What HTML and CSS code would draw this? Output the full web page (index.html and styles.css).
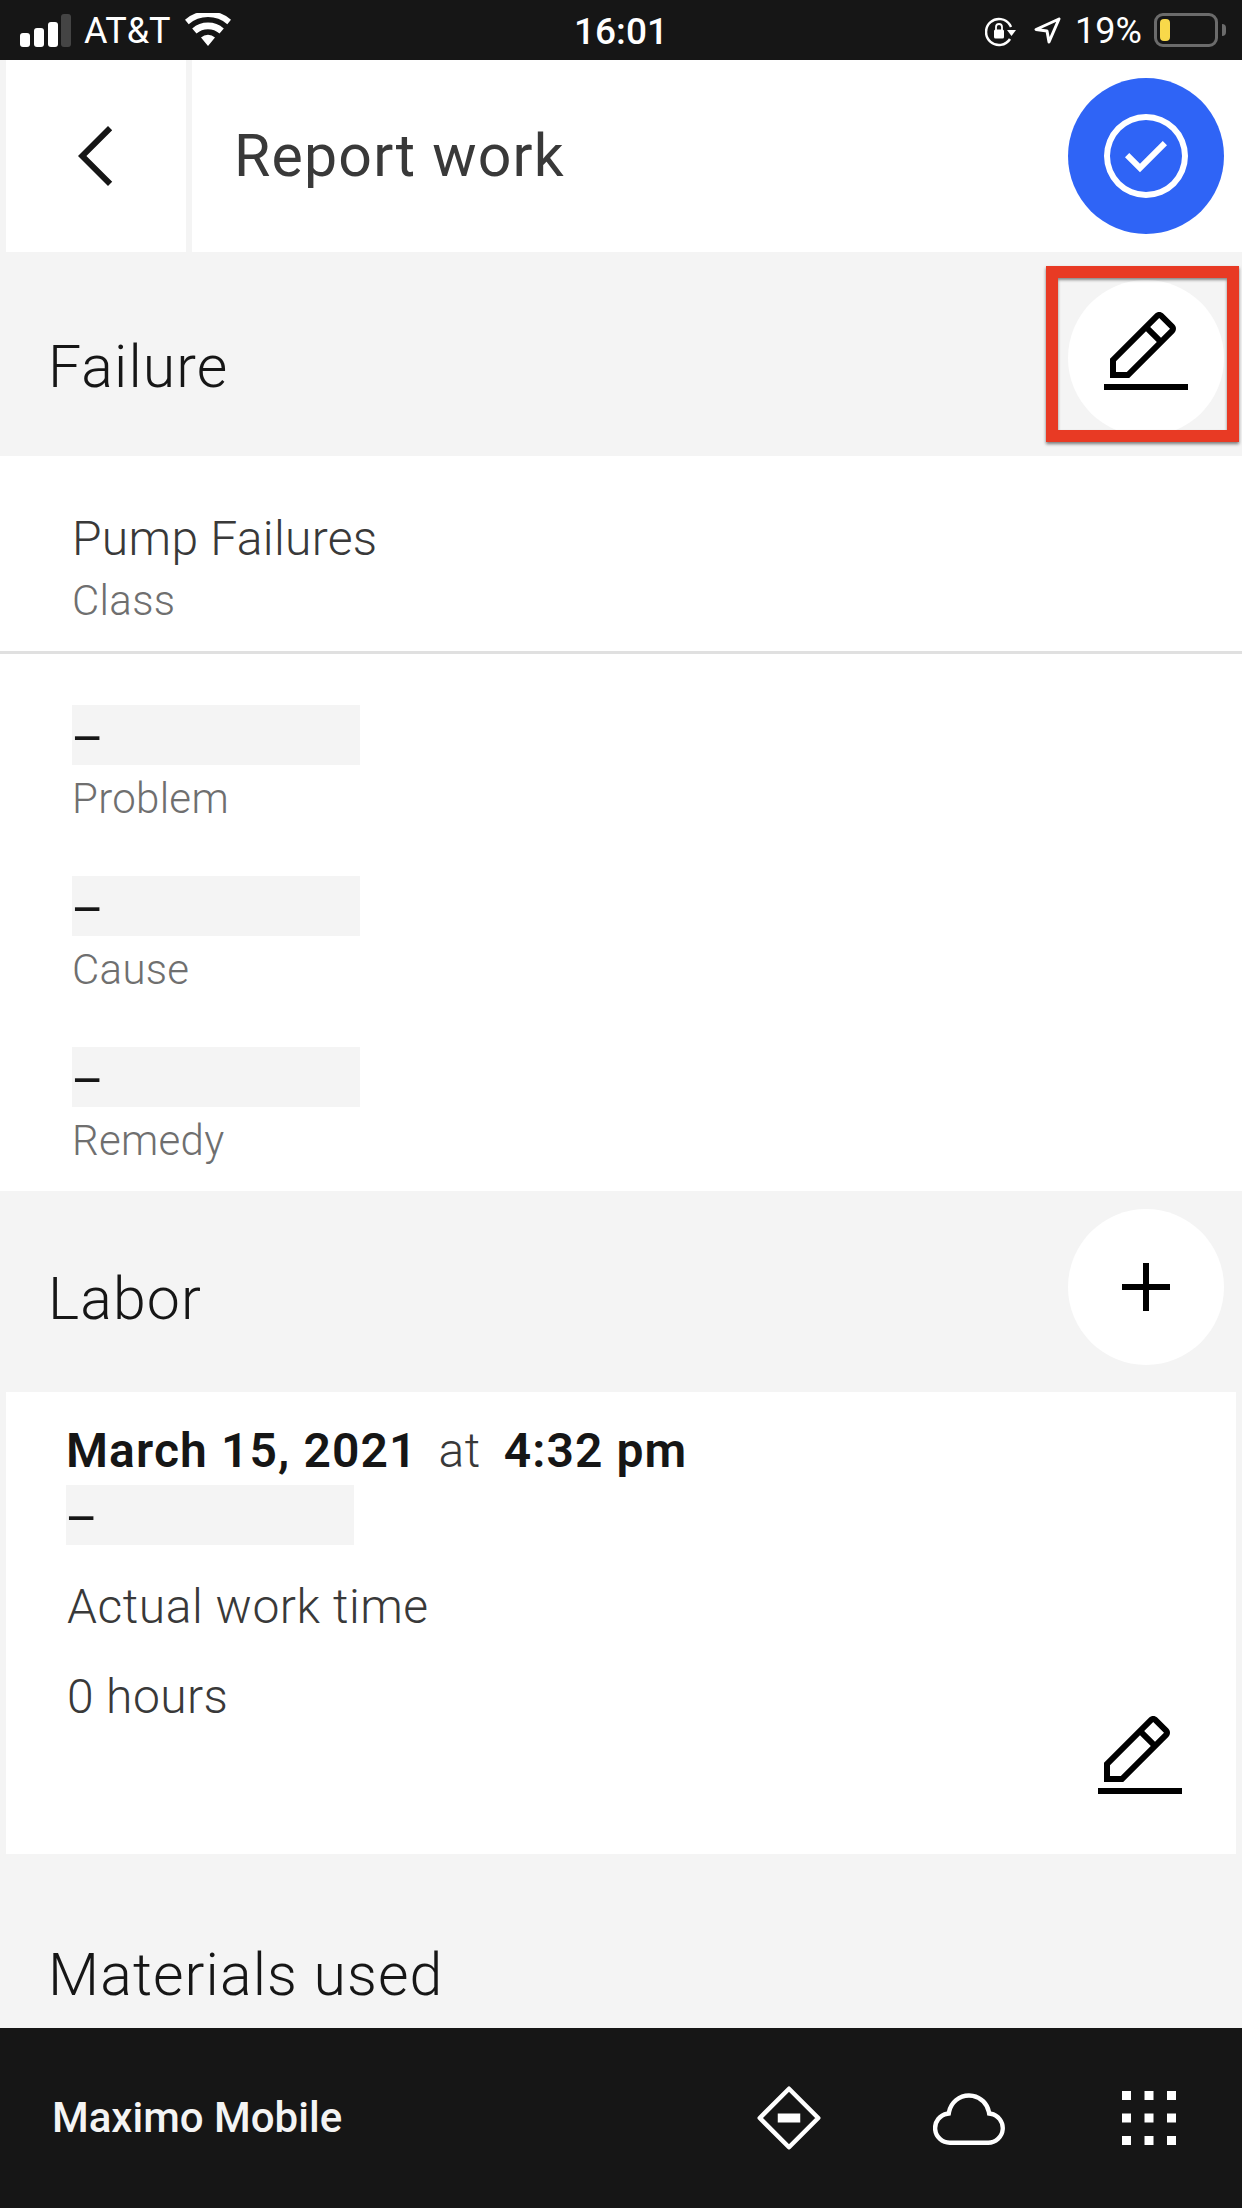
FILE: index.html
```html
<!DOCTYPE html>
<html lang="en">
<head>
<meta charset="utf-8">
<title>Report work</title>
<link rel="stylesheet" href="styles.css">
</head>
<body>
<div class="phone">
  <div class="status">
    <div class="status-left">
      <svg class="signal" width="51" height="33" viewBox="0 0 51 33"><rect x="0" y="19" width="10" height="14" rx="3" fill="#fff"/><rect x="14" y="14" width="10" height="19" rx="3" fill="#fff"/><rect x="28" y="8" width="10" height="25" rx="3" fill="#fff"/><rect x="41" y="0" width="10" height="33" rx="3" fill="#444"/></svg>
      <span class="carrier">AT&amp;T</span>
      <svg class="wifi" width="46" height="33" viewBox="0 0 46 33"><path d="M23 33l-7-8.500a10.500 10.500 0 0 1 14 0zM11.500 20.500l-4.300-5a24 24 0 0 1 31.600 0l-4.300 5a17.500 17.500 0 0 0-23 0zM3.700 11.300L0 6.700a35 35 0 0 1 46 0l-3.700 4.600a29 29 0 0 0-38.600 0z" fill="#fff"/></svg>
    </div>
    <span class="clock">16:01</span>
    <div class="status-right">
      <svg class="rotlock" width="31" height="30" viewBox="0 0 31 30"><path d="M25 22a13 13 0 1 1 0-14l1 2" fill="none" stroke="#fff" stroke-width="2.500"/><path d="M22 13h9l-4.500 6z" fill="#fff"/><rect x="9" y="12.500" width="10" height="9" rx="1.500" fill="#fff"/><path d="M11 13V10a3 3 0 0 1 6 0v3" fill="none" stroke="#fff" stroke-width="1.800"/></svg>
      <svg class="locate" width="27" height="27" viewBox="0 0 27 27"><path d="M25 2L2 12.500l11 1.500 2 11z" fill="none" stroke="#fff" stroke-width="3" stroke-linejoin="round"/></svg>
      <span class="pct">19%</span>
      <div class="battery"><div class="battery-fill"></div></div>
      <div class="battery-tip"></div>
    </div>
  </div>

  <header class="topbar">
    <div class="back">
      <svg width="96" height="96" viewBox="0 0 32 32"><path d="M10 16L20 6l1.400 1.400L12.800 16l8.600 8.600L20 26z" fill="#161616"/></svg>
    </div>
    <div class="topbar-main">
      <h1 class="page-title">Report work</h1>
      <div class="circle circle-blue">
        <svg width="96" height="96" viewBox="0 0 32 32" fill="#fff"><path d="M14 21.414l-5-5.001L10.413 15 14 18.586 21.585 11 23 12.415 14 21.414z"/><path d="M16 2a14 14 0 1 0 14 14A14 14 0 0 0 16 2zm0 26a12 12 0 1 1 12-12 12 12 0 0 1-12 12z"/></svg>
      </div>
    </div>
  </header>

  <section class="head head-failure">
    <h2 class="head-title">Failure</h2>
    <div class="circle">
      <svg class="pencil-top" width="96" height="96" viewBox="0 0 32 32"><path d="M2 26h28v2H2z"/><path d="M25.400 9c.8-.8.8-2 0-2.800l-3.600-3.600c-.8-.8-2-.8-2.800 0l-15 15V24h6.400l15-15zm-5-5L24 7.600l-3 3L17.400 7l3-3zM6 22v-3.600l10-10 3.600 3.600-10 10H6z"/></svg>
    </div>
    <div class="annotation"></div>
  </section>

  <section class="failure-body">
    <div class="class-row">
      <div class="value">Pump Failures</div>
      <div class="label">Class</div>
    </div>
    <div class="fields">
      <div class="field"><div class="skeleton">–</div><div class="label">Problem</div></div>
      <div class="field"><div class="skeleton">–</div><div class="label">Cause</div></div>
      <div class="field"><div class="skeleton">–</div><div class="label">Remedy</div></div>
    </div>
  </section>

  <section class="head head-labor">
    <h2 class="head-title">Labor</h2>
    <div class="circle">
      <svg width="96" height="96" viewBox="0 0 32 32"><path d="M17 15V8h-2v7H8v2h7v7h2v-7h7v-2h-7z"/></svg>
    </div>
  </section>

  <section class="labor-card">
    <div class="labor-text">
      <div class="labor-when"><b>March 15, 2021</b><span class="at">at</span><b>4:32 pm</b></div>
      <div class="skeleton">–</div>
      <div class="value labor-caption">Actual work time</div>
      <div class="value labor-hours">0 hours</div>
    </div>
    <svg class="labor-edit" width="96" height="96" viewBox="0 0 32 32"><path d="M2 26h28v2H2z"/><path d="M25.400 9c.8-.8.8-2 0-2.800l-3.600-3.600c-.8-.8-2-.8-2.800 0l-15 15V24h6.400l15-15zm-5-5L24 7.600l-3 3L17.400 7l3-3zM6 22v-3.600l10-10 3.600 3.600-10 10H6z"/></svg>
  </section>

  <section class="head head-materials">
    <h2 class="head-title">Materials used</h2>
  </section>

  <footer class="appbar">
    <span class="app-name">Maximo Mobile</span>
    <div class="app-icons">
      <div class="app-icon"><svg width="72" height="72" viewBox="0 0 32 32"><path d="M3 16L16 3l13 13-13 13z" fill="none" stroke="#fff" stroke-width="2" stroke-linejoin="round"/><rect x="11" y="14" width="10" height="4" fill="#fff"/></svg></div>
      <div class="app-icon"><svg width="72" height="72" viewBox="0 0 32 32"><path fill="#fff" d="M16 7h0a7.660 7.660 0 0 1 1.510.15 8 8 0 0 1 6.350 6.340l.26 1.350 1.350.24a5.500 5.500 0 0 1-1 10.920H7.500a5.500 5.500 0 0 1-1-10.920l1.340-.24.26-1.350A8 8 0 0 1 16 7m0-2a10 10 0 0 0-9.830 8.110A7.500 7.500 0 0 0 7.490 28h17a7.500 7.500 0 0 0 1.320-14.880 10 10 0 0 0-7.940-7.940A10.270 10.270 0 0 0 16 5z"/></svg></div>
      <div class="app-icon"><svg width="72" height="72" viewBox="0 0 32 32" fill="#fff"><rect x="4" y="4" width="4" height="4"/><rect x="14" y="4" width="4" height="4"/><rect x="24" y="4" width="4" height="4"/><rect x="4" y="14" width="4" height="4"/><rect x="14" y="14" width="4" height="4"/><rect x="24" y="14" width="4" height="4"/><rect x="4" y="24" width="4" height="4"/><rect x="14" y="24" width="4" height="4"/><rect x="24" y="24" width="4" height="4"/></svg></div>
    </div>
  </footer>
</div>
</body>
</html>
```
FILE: styles.css
```css
* { box-sizing: border-box; }
html, body { margin: 0; padding: 0; }
body { font-family: Roboto, "Noto Sans", sans-serif; background: #f4f4f4; color: #161616; }
.phone { width: 1242px; height: 2208px; display: flex; flex-direction: column; overflow: hidden; background: #f4f4f4; }

/* status bar */
.status { height: 60px; flex: none; background: #161616; color: #fff; display: flex; align-items: flex-start; justify-content: space-between; font-size: 36px; line-height: 42px; }
.status-left { width: 480px; display: flex; align-items: flex-start; padding: 10px 0 0 20px; }
.signal { margin: 4px 0 0 0; }
.carrier { margin-left: 13px; width: 101px; }
.wifi { margin-top: 3px; }
.clock { margin-top: 11px; font-weight: 500; font-size: 37px; }
.status-right { width: 480px; display: flex; align-items: flex-start; justify-content: flex-end; padding: 10px 16px 0 0; }
.rotlock { margin: 7px 0 0 0; }
.locate { margin: 7px 0 0 18px; }
.pct { margin-left: 14px; width: 79px; }
.battery { width: 64px; height: 34px; margin-top: 3px; border: 3px solid #6b6b6b; border-radius: 9px; padding: 3px; }
.battery-fill { width: 10px; height: 22px; background: #f8d84a; border-radius: 4px; }
.battery-tip { width: 4px; height: 12px; margin: 14px 0 0 4px; background: #6b6b6b; border-radius: 0 4px 4px 0; }

/* top bar */
.topbar { height: 192px; flex: none; display: flex; padding-left: 6px; gap: 6px; }
.back { width: 180px; background: #fff; display: flex; align-items: center; justify-content: center; }
.topbar-main { flex: 1; background: #fff; display: flex; align-items: center; justify-content: space-between; padding: 0 18px 0 42px; }
.page-title { margin: 0; font-size: 59px; font-weight: 375; letter-spacing: 1.2px; color: #393939; line-height: 72px; }
.circle { width: 156px; height: 156px; border-radius: 50%; background: #fff; display: flex; align-items: center; justify-content: center; flex: none; }
.circle-blue { background: #2f64f6; }

/* section heads */
.head { display: flex; justify-content: space-between; align-items: flex-start; padding: 0 18px 0 48px; flex: none; position: relative; }
.head-title { margin: 0; font-size: 59px; font-weight: 350; letter-spacing: 1.1px; line-height: 72px; color: #161616; }
.head-failure { height: 204px; padding-top: 28px; }
.head-failure .head-title { margin-top: 51px; }
.pencil-top { margin-top: -8px; }
.head-labor { height: 201px; padding-top: 18px; }
.head-labor .head-title { margin-top: 54px; }
.head-materials { height: 174px; padding-top: 85px; }
.annotation { position: absolute; left: 1046px; top: 14px; width: 193px; height: 176px; border: 12px solid #e83a24; box-shadow: 0 2px 3px rgba(0,0,0,.5), inset 0 2px 3px rgba(0,0,0,.45); }

/* failure body */
.failure-body { background: #fff; flex: none; height: 735px; }
.class-row { padding: 53px 0 0 72px; border-bottom: 3px solid #e0e0e0; height: 198px; }
.value { font-size: 48px; line-height: 60px; color: #393939; font-weight: 360; letter-spacing: 0.3px; }
.label { font-size: 42px; line-height: 60px; color: #6f6f6f; font-weight: 350; letter-spacing: 0.3px; margin-top: 2px; }
.fields { padding: 51px 0 0 72px; display: flex; flex-direction: column; gap: 47px; }
.field .label { margin-top: 4px; }
.skeleton { width: 288px; height: 60px; background: #f4f4f4; font-size: 50px; line-height: 68px; color: #161616; text-indent: -1px; }

/* labor card */
.labor-card { flex: none; height: 462px; margin: 0 6px; background: #fff; display: flex; justify-content: space-between; align-items: flex-end; padding: 29px 48px 48px 60px; }
.labor-text { align-self: flex-start; }
.labor-when { font-size: 48px; line-height: 60px; margin-bottom: 4px; white-space: nowrap; }
.labor-when b { font-weight: 600; letter-spacing: 1.1px; color: #161616; }
.at { margin: 0 23px 0 21px; color: #393939; font-weight: 350; letter-spacing: 0.5px; }
.labor-caption { margin-top: 32px; letter-spacing: 0.55px; margin-left: 1px; }
.labor-hours { margin-top: 30px; letter-spacing: 0.4px; margin-left: 1px; }

/* app bar */
.appbar { flex: 1; background: #161616; display: flex; align-items: center; justify-content: space-between; padding: 0 3px 0 52px; }
.app-name { color: #f4f4f4; font-size: 42px; font-weight: 500; line-height: 60px; }
.app-icons { display: flex; }
.app-icon { width: 180px; display: flex; justify-content: center; }
```
